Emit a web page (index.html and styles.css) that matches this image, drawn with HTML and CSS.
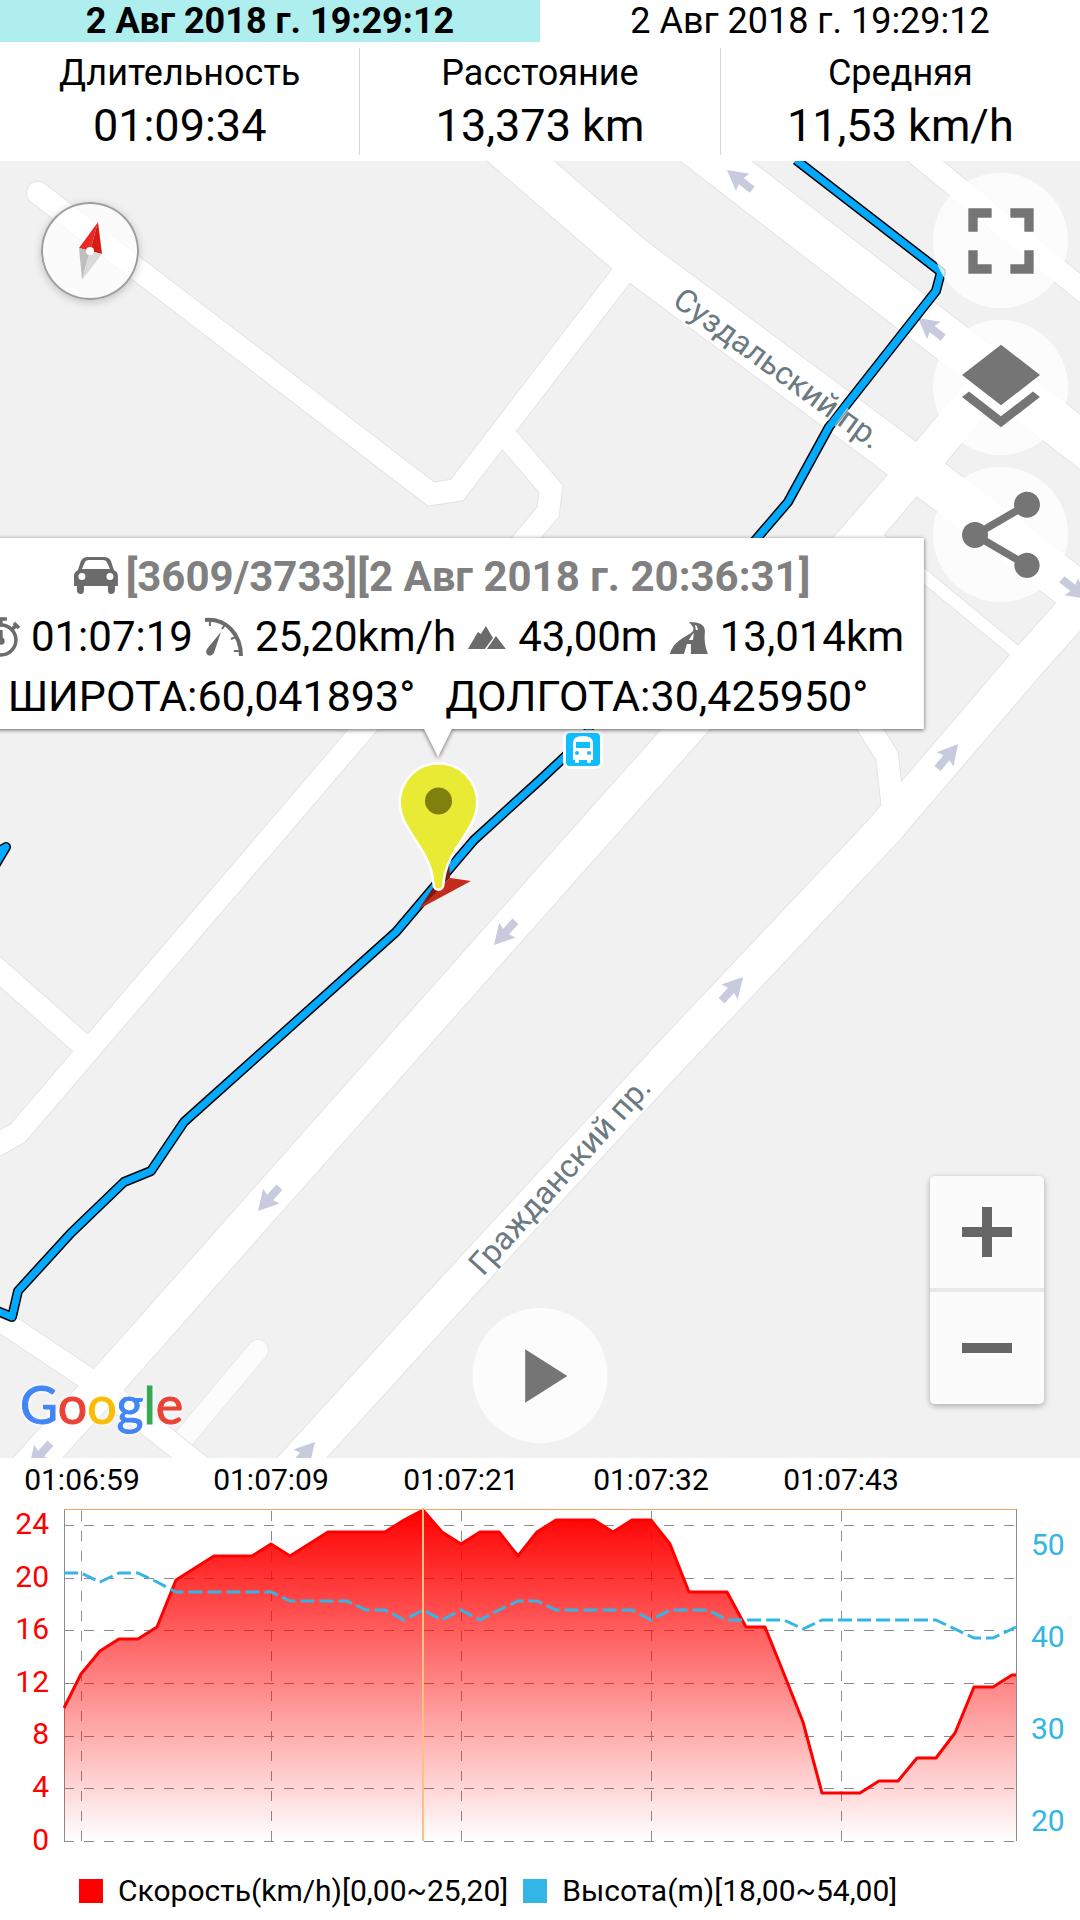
FILE: index.html
```html
<!DOCTYPE html>
<html lang="ru">
<head>
  <meta charset="UTF-8" />
  <meta name="viewport" content="width=device-width, initial-scale=1.0" />
  <title>Просмотр трека</title>
  <link rel="stylesheet" href="styles.css">
</head>
<body>
  <header>
    <div class="tabs">
      <button class="tab active">2 Авг 2018 г. 19:29:12</button>
      <button class="tab">2 Авг 2018 г. 19:29:12</button>
    </div>
    <div class="stats">
      <div class="stat">
        <div class="stat-label">Длительность</div>
        <div class="stat-value">01:09:34</div>
      </div>
      <div class="stat">
        <div class="stat-label">Расстояние</div>
        <div class="stat-value">13,373 km</div>
      </div>
      <div class="stat">
        <div class="stat-label">Средняя</div>
        <div class="stat-value">11,53 km/h</div>
      </div>
    </div>
  </header>

  <main class="map">
    <svg class="map-canvas" viewBox="0 161 1080 1297" preserveAspectRatio="xMidYMid slice">
      <defs>
        <g id="roads">
          <path d="M38 193 L431 494 L457 490 L621 276" />
          <path d="M509 440 L551 489 L548 512 L526 538 L354 740 L18 1133 L-12 1150" />
          <path d="M-12 961 L84 1046" />
          <path d="M901 141 L1092 298" />
          <path d="M845 690 L870 729 L887 756 L892 800 L893 815" />
          <path d="M-12 1312 L105 1390 L210 1474" />
          <path class="lane" d="M860 523 L1015 651 L1030 662" />
          <path class="avenue" d="M494 138 L634 259 L887 447 L1000 532 L1080 594" />
          <path class="avenue" d="M690 141 L1092 451" />
          <path class="street" d="M1000 370 L930 453 L859 536 L686 729 L596 830 L321 1140 L111 1377 L24 1473" />
          <path class="street" d="M1110 570 L1068 617 L1025 665 L884 830 L667 1060 L440 1306 L288 1473" />
        </g>
        <path id="way" d="M0 0 L-20 -11 L-18 -4 H-32 V4 H-18 L-20 11 Z" />
      </defs>

      <path class="driveway-edge" d="M258 1350 L180 1443" />
      <path class="driveway" d="M258 1350 L180 1443" />
      <use class="casing" href="#roads" />
      <use class="surface" href="#roads" />

      <!-- one-way arrows -->
      <g class="oneway">
        <use href="#way" transform="translate(727 170) rotate(218)" />
        <use href="#way" transform="translate(918 318) rotate(218)" />
        <use href="#way" transform="translate(1087 599) rotate(38)" />
        <use href="#way" transform="translate(958 744) rotate(-50)" />
        <use href="#way" transform="translate(494 945) rotate(132)" />
        <use href="#way" transform="translate(743 977) rotate(-48)" />
        <use href="#way" transform="translate(258 1211) rotate(132)" />
        <use href="#way" transform="translate(29 1467) rotate(132)" />
        <use href="#way" transform="translate(315 1442) rotate(-48)" />
      </g>

      <!-- recorded track -->
      <g class="track-edge">
        <path d="M796 160 L941 272 L936 291 L829 427 L788 502 L734 565" />
        <path d="M592 700 L588 735 L540 780 L474 840 L451 867 L396 932 L184 1122 L151 1171 L124 1182 L71 1233 L18 1291 L12 1317 L-10 1308" />
        <path d="M-10 856 L6 847 L-10 874" />
      </g>
      <g class="track">
        <path d="M796 160 L941 272 L936 291 L829 427 L788 502 L734 565" />
        <path d="M592 700 L588 735 L540 780 L474 840 L451 867 L396 932 L184 1122 L151 1171 L124 1182 L71 1233 L18 1291 L12 1317 L-10 1308" />
        <path d="M-10 856 L6 847 L-10 874" />
      </g>

      <text class="street-name" transform="translate(671 304) rotate(36)">Суздальский пр.</text>
      <text class="street-name" transform="translate(483 1277) rotate(-48)">Гражданский пр.</text>

      <!-- bus stop -->
      <g>
        <rect x="563" y="730" width="40" height="39" rx="7" fill="#fff" />
        <rect x="566" y="733" width="34" height="33" rx="4" fill="#12bdff" />
        <path d="M573 760 V743 Q573 736 583 736 Q593 736 593 743 V760 H591 V762 Q591 763 589 763 Q587 763 587 762 V760 H579 V762 Q579 763 577 763 Q575 763 575 762 V760 Z" fill="#fff" />
        <rect x="576" y="742" width="14" height="6" fill="#12bdff" />
        <circle cx="577" cy="753" r="2" fill="#12bdff" />
        <circle cx="589" cy="753" r="2" fill="#12bdff" />
      </g>

      <!-- heading arrow and pin -->
      <path d="M419 909 L449 863 L450 878 Z" fill="#7d1a0f" />
      <path d="M419 909 L450 878 L471 881 Z" fill="#c42b1c" />
      <path class="pin" d="M401 802 A37.500 37.500 0 0 1 476 802 C476 809 474 816 471 822 C463 837 456 845 450 857 C444 869 443 876 442 885 A3 3 0 0 1 435 885 C434 876 433 869 427 857 C421 845 414 837 406 822 C403 816 401 809 401 802 Z" />
      <circle cx="438.500" cy="801" r="13.500" fill="#80800f" />
    </svg>

    <div class="google"><span class="blue">G</span><span class="red">o</span><span class="yellow">o</span><span class="blue">g</span><span class="green">l</span><span class="red">e</span></div>

    <button class="compass" aria-label="Компас">
      <svg viewBox="0 0 98 98">
        <path d="M57 20 L38 46 L49 49 Z" fill="#ea2a25" />
        <path d="M57 20 L61 52 L49 49 Z" fill="#d71c15" />
        <path d="M41 78 L38 46 L49 49 Z" fill="#bfbfbf" />
        <path d="M41 78 L61 52 L49 49 Z" fill="#dadada" />
        <circle cx="49" cy="49" r="4" fill="#fff" />
      </svg>
    </button>

    <div class="tools">
      <button class="round" aria-label="Во весь экран">
        <svg width="112" height="112" viewBox="0 0 24 24"><path d="M7 14H5v5h5v-2H7v-3zm-2-4h2V7h3V5H5v5zm12 7h-3v2h5v-5h-2v3zM14 5v2h3v3h2V5h-5z" /></svg>
      </button>
      <button class="round" aria-label="Слои">
        <svg width="104" height="104" viewBox="0 0 24 24"><path d="M11.99 18.54l-7.37-5.73L3 14.07l9 7 9-7-1.63-1.27-7.38 5.74zM12 16l7.36-5.73L21 9l-9-7-9 7 1.63 1.27L12 16z" /></svg>
      </button>
      <button class="round" aria-label="Поделиться">
        <svg width="104" height="104" viewBox="0 0 24 24"><path d="M18 16.08c-.76 0-1.44.3-1.96.77L8.91 12.7c.05-.23.09-.46.09-.7s-.04-.47-.09-.7l7.05-4.11c.54.5 1.25.81 2.04.81 1.66 0 3-1.34 3-3s-1.34-3-3-3-3 1.34-3 3c0 .24.04.47.09.7L8.04 9.81C7.5 9.31 6.79 9 6 9c-1.66 0-3 1.34-3 3s1.34 3 3 3c.79 0 1.5-.31 2.04-.81l7.12 4.16c-.05.21-.08.43-.08.65 0 1.61 1.31 2.92 2.92 2.92 1.61 0 2.92-1.31 2.92-2.92s-1.31-2.92-2.92-2.92z" /></svg>
      </button>
    </div>

    <div class="callout">
      <div class="callout-row title">
        <svg width="44" height="40" viewBox="0 0 44 40" fill="#6b6b6b">
          <path fill-rule="evenodd" d="M0 34 V19 Q0 15 4 13 L7 4 Q9 0 14 0 H30 Q35 0 37 4 L40 13 Q44 15 44 19 V29 H41 V33 Q41 37 37 37 Q34 37 34 33 V29 H10 V33 Q10 37 7 37 Q3 37 3 33 V29 H0 Z M8 12 H36 L33 5 Q32 3 29 3 H15 Q12 3 11 5 Z M8 16 A3.500 3.500 0 1 0 8 23 A3.500 3.500 0 1 0 8 16 Z M36 16 A3.500 3.500 0 1 0 36 23 A3.500 3.500 0 1 0 36 16 Z" />
        </svg>
        <span>[3609/3733][2 Авг 2018 г. 20:36:31]</span>
      </div>
      <div class="callout-row info">
        <svg width="40" height="40" viewBox="0 0 40 40" fill="none" stroke="#6b6b6b" stroke-width="3.500">
          <circle cx="21" cy="23" r="15" />
          <path d="M15 2 H27 M21 2 V8 M34 6 L39 11 M36 9 L32 12 M21 13 V24" />
          <circle cx="21" cy="24" r="2" />
        </svg>
        <span>01:07:19</span>
        <svg width="40" height="40" viewBox="0 0 40 40" fill="none" stroke="#6b6b6b">
          <path d="M1 3 C22 1 37 17 37 39" stroke-width="4" />
          <path d="M6 4 V9 M21 8 L18 12 M32 20 L27 22 M37 34 H30" stroke-width="2" />
          <path d="M17 15 L10 36 Q7 40 4 38 Q1 36 3 32 Z" fill="#6b6b6b" stroke="none" />
        </svg>
        <span>25,20km/h</span>
        <svg width="40" height="40" viewBox="0 0 40 40" fill="#6b6b6b">
          <path d="M1 32 L11 15 L14 17 L19 9 L26 21 L18 32 Z M20 32 L29 19 L39 32 Z" />
        </svg>
        <span>43,00m</span>
        <svg width="40" height="40" viewBox="0 0 40 40" fill="#6b6b6b">
          <path fill-rule="evenodd" d="M1 37 C5 22 21 19 24 14 C26 10 22 8 20 5 C31 5 36 8 36 14 C35 22 36 30 39 37 H22 L22 27 H18 L15 37 Z M20 23 H24 L25 16 L23 18 Z M27 13 L29 13 L28 9 L26 8 Z" />
        </svg>
        <span>13,014km</span>
      </div>
      <div class="callout-row coords">
        <span>ШИРОТА:60,041893°</span>
        <span>ДОЛГОТА:30,425950°</span>
      </div>
    </div>

    <button class="round play" aria-label="Воспроизвести">
      <svg width="92" height="92" viewBox="0 0 24 24"><path d="M8 5v14l11-7z" /></svg>
    </button>

    <div class="zoom">
      <button aria-label="Приблизить"><svg width="50" height="50" viewBox="0 0 50 50"><path d="M20 0h10v20h20v10H30v20H20V30H0V20h20z" /></svg></button>
      <button aria-label="Отдалить"><svg width="50" height="50" viewBox="0 0 50 50"><path d="M0 20h50v10H0z" /></svg></button>
    </div>
  </main>

  <section class="chart">
    <svg class="plot" viewBox="0 1458 1080 414">
      <defs>
        <linearGradient id="speedFill" x1="0" y1="1510" x2="0" y2="1841" gradientUnits="userSpaceOnUse">
          <stop offset="0" stop-color="#f00" />
          <stop offset="1" stop-color="#f00" stop-opacity="0" />
        </linearGradient>
      </defs>

      <g class="time">
        <text x="82" y="1490">01:06:59</text>
        <text x="271" y="1490">01:07:09</text>
        <text x="461" y="1490">01:07:21</text>
        <text x="651" y="1490">01:07:32</text>
        <text x="841" y="1490">01:07:43</text>
      </g>

      <path class="grid" d="M64 1525.500 H1016 M64 1578.500 H1016 M64 1630.500 H1016 M64 1683.500 H1016 M64 1736.500 H1016 M64 1788.500 H1016 M64 1841.500 H1016" />
      <path class="grid" d="M81.500 1511 V1841 M271.500 1511 V1841 M461.500 1511 V1841 M651.500 1511 V1841 M841.500 1511 V1841" />
      <path class="frame" d="M64.500 1509 V1841 M1016.500 1509 V1841" />

      <path fill="url(#speedFill)" d="M64 1708 L81 1674 L100 1651 L119 1639 H138 L157 1627 L176 1580 L195 1568 L214 1556 H252 L271 1544 L290 1556 L328 1532 H385 L404 1520 L423 1510 L442 1532 L461 1544 L480 1532 H499 L518 1556 L537 1532 L556 1520 H594 L613 1532 L632 1520 H651 L670 1544 L689 1592 H727 L746 1627 H765 L784 1674 L803 1722 L822 1793 H860 L879 1781 H898 L917 1758 H936 L955 1733 L974 1687 H993 L1012 1675 H1016 V1841 H64 Z" />
      <path class="speed" d="M64 1708 L81 1674 L100 1651 L119 1639 H138 L157 1627 L176 1580 L195 1568 L214 1556 H252 L271 1544 L290 1556 L328 1532 H385 L404 1520 L423 1510 L442 1532 L461 1544 L480 1532 H499 L518 1556 L537 1532 L556 1520 H594 L613 1532 L632 1520 H651 L670 1544 L689 1592 H727 L746 1627 H765 L784 1674 L803 1722 L822 1793 H860 L879 1781 H898 L917 1758 H936 L955 1733 L974 1687 H993 L1012 1675 H1016" />
      <path class="altitude" d="M64 1573 H81 L100 1582 L119 1573 H138 L157 1582 L176 1592 H271 L290 1601 H347 L366 1610 H385 L404 1620 L423 1610 L442 1620 L461 1610 L480 1620 L499 1610 L518 1601 H537 L556 1610 H632 L651 1620 L670 1610 H708 L727 1620 H784 L803 1629 L822 1620 H936 L955 1629 L974 1638 H993 L1016 1627" />

      <path class="limit" d="M64 1509.500 H1016" />
      <path class="cursor" d="M423 1510 V1841" />

      <g class="speed-axis">
        <text x="49" y="1534">24</text>
        <text x="49" y="1587">20</text>
        <text x="49" y="1639">16</text>
        <text x="49" y="1692">12</text>
        <text x="49" y="1744">8</text>
        <text x="49" y="1797">4</text>
        <text x="49" y="1850">0</text>
      </g>
      <g class="altitude-axis">
        <text x="1031" y="1555">50</text>
        <text x="1031" y="1647">40</text>
        <text x="1031" y="1739">30</text>
        <text x="1031" y="1831">20</text>
      </g>
    </svg>
    <div class="legend">
      <span class="key key-speed">Скорость(km/h)[0,00~25,20]</span>
      <span class="key key-altitude">Высота(m)[18,00~54,00]</span>
    </div>
  </section>
</body>
</html>
```
FILE: styles.css
```css
:root {
  --speed: #f00;
  --altitude: #33b5e5;
  --icon: #757575;
  --active: #afeeee;
}

* {
  box-sizing: border-box;
}

body {
  margin: 0;
  min-height: 100vh;
  display: flex;
  flex-direction: column;
  background: #fff;
  color: #000;
  font-family: Roboto, "Noto Sans", sans-serif;
  overflow-x: hidden;
}

button {
  border: none;
  padding: 0;
  color: inherit;
  font-family: inherit;
  cursor: pointer;
}

svg {
  display: block;
  flex: none;
}

/* header */
.tabs {
  display: flex;
}

.tab {
  flex: 1;
  height: 42px;
  font-size: 36px;
  line-height: 42px;
  background: #fff;
}

.tab.active {
  background: var(--active);
  font-weight: bold;
}

.stats {
  display: flex;
  padding: 6px 0;
}

.stat {
  flex: 1;
  padding-top: 2px;
  text-align: center;
}

.stat + .stat {
  border-left: 1px solid #d8d8d8;
}

.stat-label {
  font-size: 36px;
  line-height: 46px;
}

.stat-value {
  font-size: 45px;
  line-height: 59px;
}

/* map */
.map {
  position: relative;
  flex: 1;
  overflow: hidden;
  background: #f1f1f1;
}

.map-canvas {
  position: absolute;
  width: 100%;
  height: 100%;
}

#roads path {
  --w: 22px;
  fill: none;
  stroke-width: calc(var(--w) + var(--edge));
  stroke-linecap: round;
}

#roads .lane {
  --w: 12px;
}

#roads .street {
  --w: 36px;
}

#roads .avenue {
  --w: 43px;
}

.casing {
  --edge: 2px;
  stroke: #e4e4e4;
}

.surface {
  --edge: 0px;
  stroke: #fff;
}

.driveway,
.driveway-edge {
  fill: none;
  stroke: #fcfcfc;
  stroke-width: 20px;
  stroke-linecap: round;
}

.driveway-edge {
  stroke: #e8e8e8;
  stroke-width: 22px;
}

.oneway {
  fill: #c8cbde;
}

.track,
.track-edge {
  fill: none;
  stroke: #00aaff;
  stroke-width: 7px;
  stroke-linejoin: round;
}

.track-edge {
  stroke: #000;
  stroke-width: 10px;
}

.street-name {
  font-size: 32px;
  fill: #6b7a80;
  stroke: rgba(255, 255, 255, 0.6);
  stroke-width: 5px;
  paint-order: stroke;
}

.pin {
  fill: #e9ea33;
  stroke: #fff;
  stroke-width: 5px;
  paint-order: stroke;
}

.google {
  position: absolute;
  left: 20px;
  bottom: 28px;
  font-family: Lato, sans-serif;
  font-size: 52px;
  line-height: 52px;
  text-shadow: 0 0 5px #fff, 0 0 5px #fff;
  -webkit-text-stroke: 1px currentColor;
}

.blue {
  color: #4285f4;
}

.red {
  color: #ea4335;
}

.yellow {
  color: #fbbc05;
}

.green {
  color: #34a853;
}

.compass {
  position: absolute;
  left: 41px;
  top: 41px;
  width: 98px;
  height: 98px;
  border-radius: 50%;
  background: rgba(255, 255, 255, 0.7);
  box-shadow: inset 0 0 0 2px #9e9e9e, 0 2px 8px rgba(0, 0, 0, 0.2);
}

.tools {
  position: absolute;
  top: 12px;
  right: 12px;
  display: flex;
  flex-direction: column;
  gap: 12px;
}

.round {
  display: flex;
  align-items: center;
  justify-content: center;
  width: 135px;
  height: 135px;
  border-radius: 50%;
  background: rgba(255, 255, 255, 0.8);
  fill: var(--icon);
}

.play {
  position: absolute;
  left: 50%;
  bottom: 15px;
  transform: translateX(-50%);
}

.zoom {
  position: absolute;
  right: 36px;
  bottom: 54px;
  border-radius: 5px;
  box-shadow: 0 2px 6px rgba(0, 0, 0, 0.3);
  overflow: hidden;
}

.zoom button {
  display: flex;
  align-items: center;
  justify-content: center;
  width: 114px;
  height: 112px;
  background: #fbfbfb;
  fill: #666;
}

.zoom button + button {
  height: 116px;
  border-top: 4px solid #e8e8e8;
}

/* point info, anchored to the pin */
.callout {
  position: absolute;
  left: 438px;
  top: 377px;
  padding: 9px 20px 3px;
  transform: translateX(-50%);
  background: #fff;
  filter: drop-shadow(0 1px 2px rgba(0, 0, 0, 0.6));
  font-size: 42px;
  line-height: 60px;
  white-space: nowrap;
}

.callout::after {
  content: "";
  position: absolute;
  left: 50%;
  top: 100%;
  width: 28px;
  height: 28px;
  background: #fff;
  clip-path: polygon(0 0, 100% 0, 50% 100%);
  transform: translateX(-50%);
}

.callout-row {
  display: flex;
  align-items: center;
  justify-content: center;
}

.title {
  gap: 8px;
  padding-left: 8px;
  color: #808080;
  font-weight: bold;
}

.info {
  gap: 11px;
  padding-left: 8px;
}

.coords {
  gap: 30px;
  font-size: 43px;
  line-height: 59px;
}

/* chart */
.plot {
  width: 100%;
  font-size: 30px;
}

.plot path {
  stroke-linejoin: round;
}

.time {
  text-anchor: middle;
}

.speed-axis {
  fill: var(--speed);
  text-anchor: end;
}

.altitude-axis {
  fill: var(--altitude);
}

.grid,
.frame {
  fill: none;
  stroke: #8c8c8c;
}

.grid {
  stroke-dasharray: 10 10;
}

.speed,
.altitude {
  fill: none;
  stroke: var(--speed);
  stroke-width: 3px;
}

.altitude {
  stroke: var(--altitude);
  stroke-dasharray: 14 5;
}

.limit {
  stroke: #f0a860;
}

.cursor {
  stroke: #ffc080;
  stroke-width: 2px;
}

.legend {
  display: flex;
  gap: 15px;
  padding: 1px 79px 11px;
  font-size: 30px;
  line-height: 36px;
}

.key {
  display: flex;
  align-items: center;
  gap: 15px;
}

.key::before {
  content: "";
  width: 24px;
  height: 24px;
  background: var(--speed);
}

.key-altitude::before {
  background: var(--altitude);
}
```
